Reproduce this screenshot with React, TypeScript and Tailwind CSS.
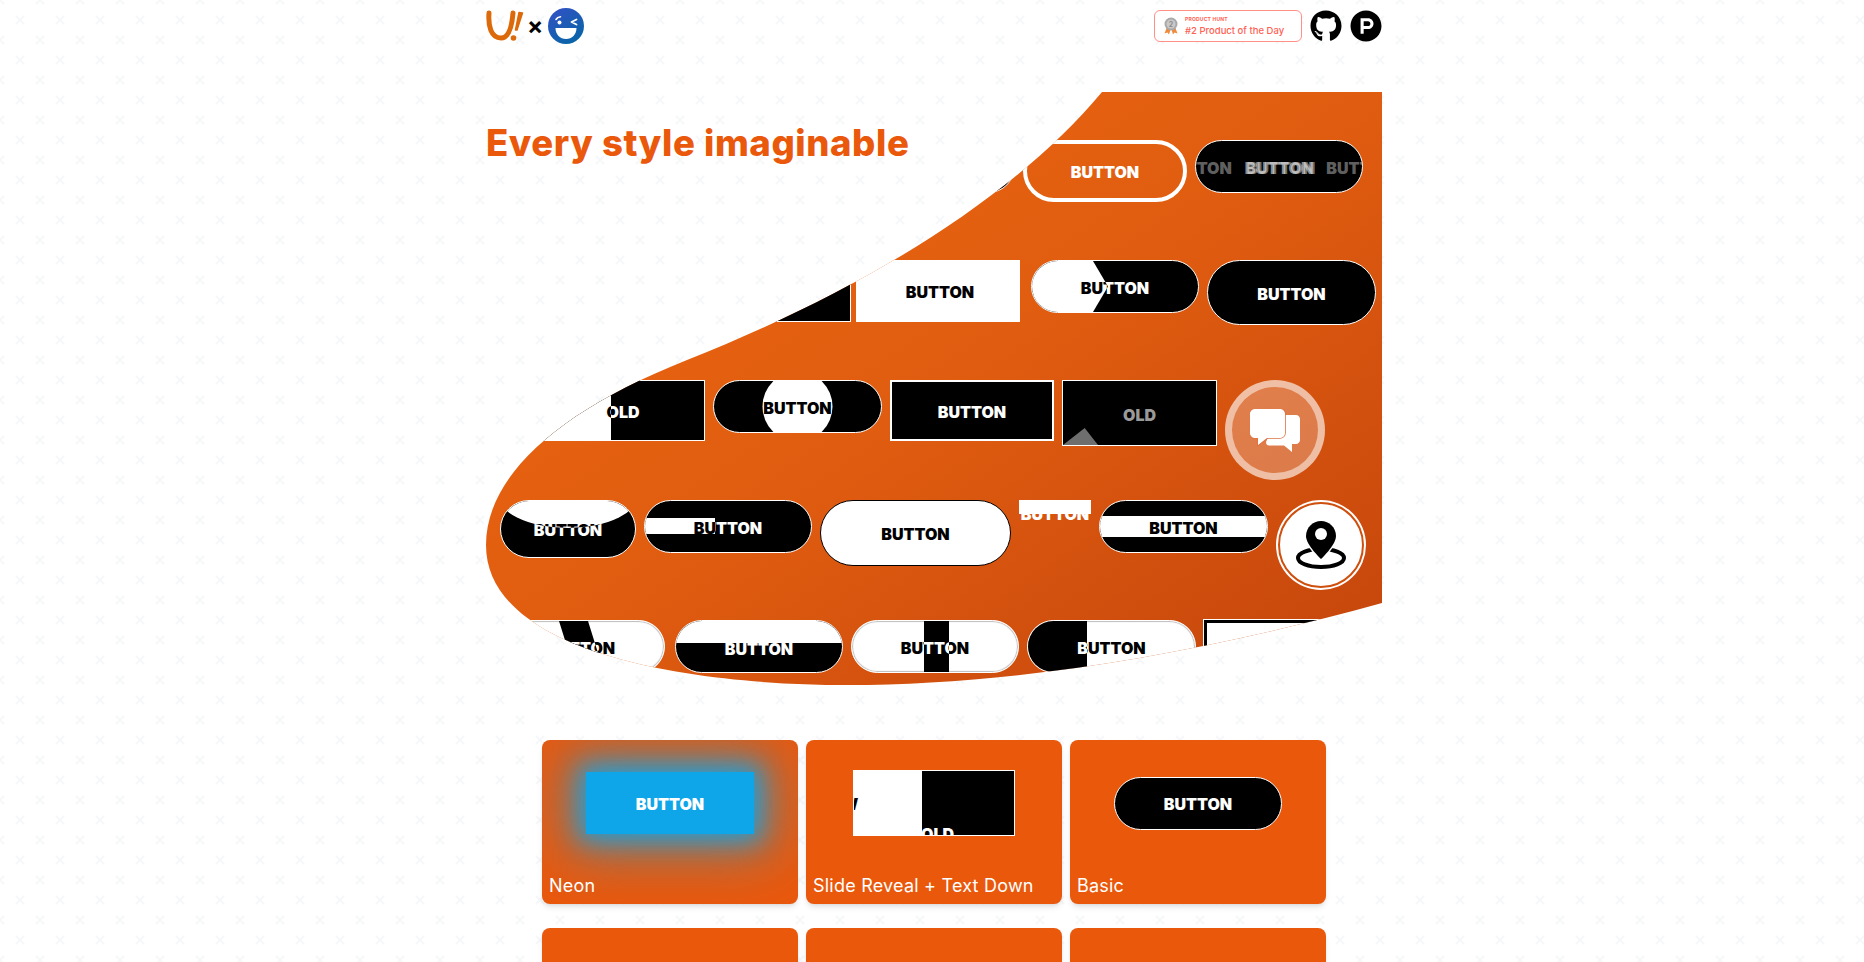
import { FaGithub, FaProductHunt } from "react-icons/fa";

const TYPE = "font-black text-[16px] leading-none whitespace-nowrap";
const LABEL = `relative top-px ${TYPE}`;
const PILL = "rounded-full border-[1.5px] border-white";
const RECT = "border border-white";
const SOFT = "shadow-[inset_0_0_1px_1px_#bdbdbd]";

interface BtnProps {
    size: string;
    look: string;
    label?: string;
    labelClass?: string;
    overlay?: string;
    clip?: string;
}

const Btn = ({ size, look, label = "BUTTON", labelClass = "", overlay, clip }: BtnProps) => (
    <div className={`relative flex shrink-0 items-center justify-center overflow-hidden ${size} ${look}`}>
        <span className={`${LABEL} ${labelClass}`}>{label}</span>
        {clip && (
            <div className={`absolute inset-0 flex items-center justify-center ${overlay} ${clip}`}>
                <span className={`${LABEL} ${labelClass}`}>{label}</span>
            </div>
        )}
    </div>
);

const Logo = () => (
    <svg width="38" height="36" viewBox="0 0 38 36" fill="none" className="shrink-0">
        <path d="M3 5C2 18 5 30 15 30C23 30 26 17 27 5" stroke="#dc6a0b" strokeWidth="5" strokeLinecap="round" />
        <path d="M33 4.5L36.5 5L31 22L29.5 22Z" fill="#dc6a0b" stroke="#dc6a0b" strokeWidth="1.5" strokeLinejoin="round" />
        <circle cx="27.5" cy="30" r="2.8" fill="#dc6a0b" />
    </svg>
);

const Wink = () => (
    <svg width="36" height="36" viewBox="0 0 36 36" className="shrink-0">
        <defs>
            <linearGradient id="wink" x1="0" y1="0" x2="0.6" y2="1">
                <stop offset="0" stopColor="#3350c6" />
                <stop offset="1" stopColor="#0a64a8" />
            </linearGradient>
        </defs>
        <circle cx="18" cy="18" r="18" fill="url(#wink)" />
        <path d="M7.5 20H28.5C28.5 26.5 24 31 18 31C12 31 7.5 26.5 7.5 20Z" fill="#fff" />
        <path d="M8 11.5C8.8 10 10.5 9 12.5 8.8" stroke="#fff" strokeWidth="1.6" strokeLinecap="round" fill="none" />
        <circle cx="11.5" cy="14.5" r="2" fill="#fff" />
        <path d="M28.5 11.5L23.5 14L28.5 16.5" stroke="#fff" strokeWidth="1.8" strokeLinecap="round" strokeLinejoin="round" fill="none" />
    </svg>
);

const Medal = () => (
    <svg width="14" height="18" viewBox="0 0 14 18" className="shrink-0">
        <path d="M3 10L0.5 16.5L3.5 15.5L5 17.5L7 11Z" fill="#f08a3c" />
        <path d="M11 10L13.5 16.5L10.5 15.5L9 17.5L7 11Z" fill="#f08a3c" />
        <circle cx="7" cy="7" r="6.5" fill="#a9a9a9" />
        <circle cx="7" cy="7" r="4.5" fill="#c9c9c9" />
        <text x="7" y="9.5" textAnchor="middle" fontSize="7" fontWeight="700" fill="#8c8c8c">2</text>
    </svg>
);

const ChatIcon = () => (
    <svg width="50" height="43" viewBox="0 0 50 43" className="shrink-0">
        <path d="M28 6H46C48.2 6 50 7.8 50 10V31C50 33.2 48.2 35 46 35H42V43L34 36.5H19C17 36.5 16 35 16 33Z" fill="#fff" />
        <path d="M5 0H30C32.8 0 35 2.2 35 5V24C35 26.8 32.8 29 30 29H17L8 36V29H5C2.2 29 0 26.8 0 24V5C0 2.2 2.2 0 5 0Z" fill="#fff" stroke="#dd7240" strokeWidth="1.6" paintOrder="stroke" />
    </svg>
);

const PinIcon = () => (
    <svg width="50" height="48" viewBox="0 0 50 48" className="shrink-0">
        <ellipse cx="25" cy="37" rx="23" ry="9" fill="none" stroke="#000" strokeWidth="4" />
        <path d="M25 0C16.7 0 10 6.7 10 15C10 24 25 38 25 38C25 38 40 24 40 15C40 6.7 33.3 0 25 0Z" fill="#000" stroke="#fff" strokeWidth="3" paintOrder="stroke" />
        <circle cx="25" cy="13" r="6" fill="#fff" />
    </svg>
);

const Hero = () => (
    <div className="h-[593px] overflow-hidden bg-gradient-to-br from-[#ee6a10] via-[#e05c10] via-50% to-[#c4450c] pt-[48px] [clip-path:path('M616_0L896_0L896_511C700_565_520_593_361_593C200_593_0_560_0_453C0_385_70_320_201_268C360_205_520_115_616_0Z')]">
        <div className="flex h-[120px] items-start gap-2 pl-[361px]">
            <Btn size="w-[168px] h-[53px]" look={`${PILL} bg-black text-white`} />
            <Btn size="w-[164px] h-[62px]" look="rounded-full border-4 border-white text-white" />
            <div className={`relative flex h-[53px] w-[168px] shrink-0 items-center justify-center gap-[13px] overflow-hidden ${PILL} bg-black text-white/40`}>
                <span className={LABEL}>BUTTON</span>
                <span className={`${LABEL} text-white/55`}>
                    BUTTON
                    <span className="absolute left-[2px] top-0 text-white/45">BUTTON</span>
                </span>
                <span className={LABEL}>BUTTON</span>
            </div>
        </div>
        <div className="flex h-[120px] items-start gap-2 pl-[201px]">
            <Btn size="w-[164px] h-[62px] mr-[-3px]" look={`${RECT} bg-black text-white`} />
            <Btn size="w-[164px] h-[62px]" look="bg-white text-black" labelClass="left-[2px]" />
            <Btn size="w-[168px] h-[53px] ml-[3px]" look={`${PILL} bg-black text-white`} overlay="bg-white text-black" clip="[clip-path:polygon(0_0,61px_0,76px_50%,61px_100%,0_100%)]" />
            <Btn size="w-[169px] h-[65px]" look={`${PILL} bg-black text-white`} />
        </div>
        <div className="flex h-[120px] items-start gap-2 pl-[55px]">
            <Btn size="w-[164px] h-[61px]" look={`${RECT} bg-black text-white`} label="OLD" overlay="bg-white text-black" clip="[clip-path:polygon(0_0,69px_0,69px_100%,0_100%)]" />
            <Btn size="w-[169px] h-[53px]" look={`${PILL} bg-black text-black`} overlay="bg-white text-black" clip="[clip-path:circle(35px_at_50%_50%)]" />
            <Btn size="w-[164px] h-[61px]" look="border-2 border-white bg-black text-white" />
            <div className={`relative flex h-[66px] w-[155px] shrink-0 items-center justify-center overflow-hidden ${RECT} bg-black text-[#9a9a9a]`}>
                <span className={`${LABEL} pt-[1px]`}>OLD</span>
                <div className="absolute bottom-0 left-0 h-[17px] w-[35px] bg-[#6e6e6e] [clip-path:polygon(0_100%,62%_0,100%_100%)]" />
            </div>
            <div className="flex size-[100px] shrink-0 items-center justify-center rounded-full border-[7px] border-white/50 bg-white/25">
                <ChatIcon />
            </div>
        </div>
        <div className="flex h-[120px] items-start gap-2 pl-[14px]">
            <Btn size="w-[136px] h-[58px]" look={`${PILL} bg-black text-white`} overlay="bg-white text-black" clip="[clip-path:ellipse(72px_36px_at_50%_-9px)]" />
            <Btn size="w-[168px] h-[53px]" look={`${PILL} bg-black text-white`} overlay="bg-white text-black" clip="[clip-path:polygon(0_17px,70px_17px,70px_33px,0_33px)]" />
            <Btn size="w-[191px] h-[66px]" look="rounded-full border border-black bg-white text-black" />
            <div className="relative h-[14px] w-[72px] shrink-0 text-center text-white">
                <span className={`absolute inset-x-0 top-[6px] ${TYPE}`}>BUTTON</span>
                <div className="absolute inset-0 bg-white" />
            </div>
            <Btn size="w-[169px] h-[53px]" look={`${PILL} bg-black text-white`} overlay="bg-white text-black" clip="[clip-path:polygon(0_15px,100%_15px,100%_36px,0_36px)]" />
            <div className="flex size-[90px] shrink-0 items-center justify-center rounded-full bg-white p-[2px]">
                <div className="flex size-full items-center justify-center rounded-full border-2 border-[#cf4f0e] bg-white">
                    <PinIcon />
                </div>
            </div>
        </div>
        <div className="flex h-[120px] items-start gap-2 pl-[11px]">
            <Btn size="w-[168px] h-[53px] mr-[2px]" look={`${PILL} bg-white text-black ${SOFT}`} overlay="bg-black text-white" clip="[clip-path:polygon(61px_0,90px_0,106px_100%,77px_100%)]" />
            <Btn size="w-[168px] h-[53px]" look={`${PILL} bg-black text-white`} labelClass="translate-y-[1px]" overlay="bg-white text-white" clip="[clip-path:polygon(0_0,100%_0,100%_22px,0_22px)]" />
            <Btn size="w-[168px] h-[53px]" look={`${PILL} bg-white text-black ${SOFT}`} overlay="bg-black text-white" clip="[clip-path:polygon(72px_0,97px_0,97px_100%,72px_100%)]" />
            <Btn size="w-[169px] h-[53px]" look={`${PILL} bg-white text-black ${SOFT}`} overlay="bg-black text-white" clip="[clip-path:polygon(0_0,59px_0,59px_100%,0_100%)]" />
            <div className="h-[62px] w-[164px] shrink-0 border-[3px] border-black bg-white outline outline-white" />
        </div>
    </div>
);

const Card = ({ name, children }: { name: string; children?: React.ReactNode }) => (
    <div className="relative h-[164px] overflow-hidden rounded-lg bg-[#ea580c] shadow-md">
        <div className="flex h-[124px] items-center justify-center pt-[2px]">{children}</div>
        <p className="absolute bottom-[5px] left-[7px] text-[18px] leading-[27px] text-white tracking-[0.012em]">{name}</p>
    </div>
);

export default function App() {
    return (
        <div className="flex h-screen flex-col items-center overflow-hidden bg-white bg-[url('data:image/svg+xml,%3Csvg%20xmlns=%22http://www.w3.org/2000/svg%22%20width=%2240%22%20height=%2240%22%3E%3Cpath%20d=%22M16%2016l8%208m0-8l-8%208M-4-4l8%208m0-8l-8%208M36-4l8%208m0-8l-8%208M-4%2036l8%208m0-8l-8%208M36%2036l8%208m0-8l-8%208%22%20stroke=%22%23f6f7f8%22%20stroke-width=%222%22/%3E%3C/svg%3E')] pl-1 font-['Inter',sans-serif]">
            <div className="relative w-[896px] shrink-0">
                <header className="flex h-[92px] items-start justify-between pt-2">
                    <div className="flex h-9 items-center">
                        <Logo />
                        <span className="ml-[3px] mr-[5px] text-[24px] font-bold leading-none text-black">×</span>
                        <Wink />
                    </div>
                    <div className="flex h-9 items-center gap-2">
                        <div className="flex h-[32px] w-[148px] items-center gap-[7px] rounded-md border border-[#ff8f87] bg-white pl-[9px] text-[#ff6154]">
                            <Medal />
                            <div className="flex flex-col font-medium">
                                <span className="text-[5px] font-bold leading-[9px] tracking-[0.04em]">PRODUCT HUNT</span>
                                <span className="text-[9.5px] leading-[13px]">#2 Product of the Day</span>
                            </div>
                        </div>
                        <FaGithub className="size-[32px] text-black" />
                        <FaProductHunt className="size-[32px] text-black" />
                    </div>
                </header>
                <Hero />
                <h1 className="absolute left-0 top-[120px] text-[36.5px] font-extrabold leading-[46px] tracking-[0.016em] text-[#ea580c]">Every style imaginable</h1>
            </div>
            <div className="mt-[55px] grid w-[784px] shrink-0 grid-cols-3 gap-x-2 gap-y-6">
                <Card name="Neon">
                    <Btn size="w-[168px] h-[62px]" look="bg-[#0ea5e9] text-white shadow-[0_0_25px_6px_rgba(14,165,233,0.85),0_0_55px_20px_rgba(14,165,233,0.5)]" />
                </Card>
                <Card name="Slide Reveal + Text Down">
                    <div className={`relative h-[66px] w-[162px] overflow-hidden ${RECT} bg-black`}>
                        <div className="absolute inset-y-0 left-0 w-[68px] bg-white" />
                        <span className={`absolute left-[-35px] top-[25px] text-black ${TYPE}`}>NEW</span>
                        <span className={`absolute left-[67px] top-[55px] text-white ${TYPE}`}>OLD</span>
                    </div>
                </Card>
                <Card name="Basic">
                    <Btn size="w-[168px] h-[53px]" look={`${PILL} bg-black text-white`} />
                </Card>
                <Card name="Wobble">
                    <Btn size="w-[168px] h-[53px] mt-[2px]" look={`${PILL} bg-white text-black`} />
                </Card>
                <Card name="Blur">
                    <div />
                </Card>
                <Card name="Flip">
                    <div />
                </Card>
            </div>
        </div>
    );
}
